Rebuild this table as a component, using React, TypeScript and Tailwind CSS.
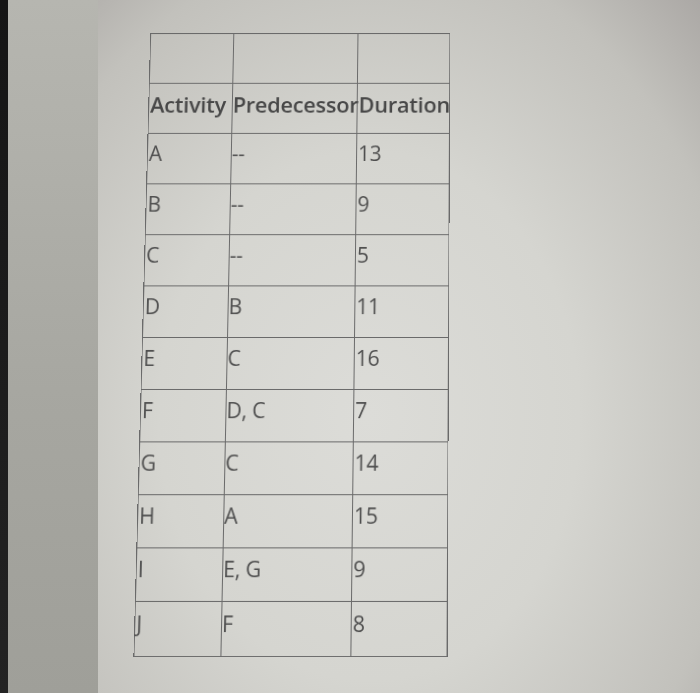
const rows: [string, string, string][] = [
  ["A", "--", "13"],
  ["B", "--", "9"],
  ["C", "--", "5"],
  ["D", "B", "11"],
  ["E", "C", "16"],
  ["F", "D, C", "7"],
  ["G", "C", "14"],
  ["H", "A", "15"],
  ["I", "E, G", "9"],
  ["J", "F", "8"],
];

function Row({ cells, head = false }: { cells: [string, string, string]; head?: boolean }) {
  const text = head ? "font-semibold text-[22px] text-[#474747]" : "font-normal text-[#4e4e4e]";
  return (
    <div className="grid grid-cols-[85px_127px_94px] h-[52px] border-b border-[#6a6a6a] last:border-b-0">
      <div className={`flex items-center pb-[10px] pl-[1px] border-r border-[#6a6a6a] ${text}`}>{cells[0]}</div>
      <div className={`flex items-center pb-[10px] pl-[0px] border-r border-[#6a6a6a] ${text}`}>{cells[1]}</div>
      <div className={`flex items-center pb-[10px] pl-[1px] ${text}`}>{cells[2]}</div>
    </div>
  );
}

export default function App() {
  return (
    <div className="flex w-[700px] h-[693px] overflow-hidden">
      {/* bezel + desk edge */}
      <div className="w-[8px] shrink-0 bg-[linear-gradient(180deg,#151515,#232323)]" />
      <div className="w-[90px] shrink-0 bg-[linear-gradient(180deg,#b6b6b0,#a6a6a0_60%,#9f9f99)]" />

      {/* screen */}
      <div className="flex-1 pl-[44px] pt-[25px] bg-[radial-gradient(ellipse_at_45%_60%,#dcdcd8_0%,#d5d5d0_45%,#c2c1bc_80%,#aba8a5_100%)]">
        <div className="w-[307px] border border-[#6a6a6a] text-[21px] leading-none whitespace-nowrap [font-family:'Open_Sans','Liberation_Sans',sans-serif] tracking-[-0.01em] [transform:perspective(1200px)_rotateX(5deg)_skewX(-0.9deg)]">
          <Row cells={["", "", ""]} />
          <Row head cells={["Activity", "Predecessor", "Duration"]} />
          {rows.map((r) => (
            <Row key={r[0]} cells={r} />
          ))}
        </div>
      </div>
    </div>
  );
}
